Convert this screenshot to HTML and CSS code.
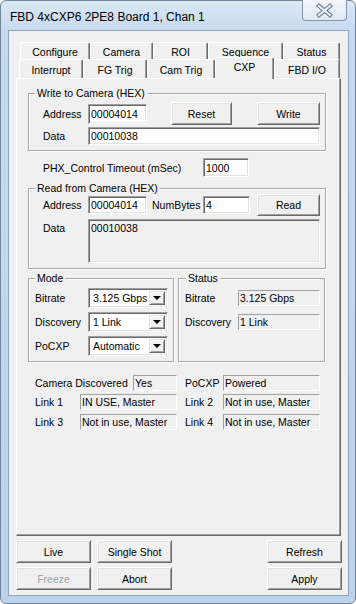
FILE: index.html
```html
<!DOCTYPE html>
<html>
<head>
<meta charset="utf-8">
<link rel="stylesheet" href="styles.css">
</head>
<body>
<div class="window">
  <div class="titlebar">
    <span class="title">FBD 4xCXP6 2PE8 Board 1, Chan 1</span>
    <span class="close">
      <svg width="43" height="19" viewBox="0 0 43 19">
        <path d="M16 5 L27 14 M27 5 L16 14" stroke="#6a7d95" stroke-width="4.2" stroke-linecap="square" fill="none"/>
        <path d="M16 5 L27 14 M27 5 L16 14" stroke="#eef3f8" stroke-width="2" stroke-linecap="square" fill="none"/>
      </svg>
    </span>
  </div>
  <div class="client">
    <div class="tabctl">
      <div class="tabrow row1">
        <div class="tab w-configure">Configure</div>
        <div class="tab w-camera">Camera</div>
        <div class="tab w-roi">ROI</div>
        <div class="tab w-sequence">Sequence</div>
        <div class="tab w-status">Status</div>
      </div>
      <div class="tabrow row2">
        <div class="tab w-interrupt">Interrupt</div>
        <div class="tab w-fgtrig">FG Trig</div>
        <div class="tab w-camtrig">Cam Trig</div>
        <div class="tab sel w-cxp">CXP</div>
        <div class="tab w-fbdio">FBD I/O</div>
      </div>
      <div class="panel">
        <fieldset class="group g-write">
          <legend>Write to Camera (HEX)</legend>
          <div class="row r23">
            <span class="lbl l45">Address</span>
            <span class="edit e-addr">00004014</span>
            <span class="btn b-reset">Reset</span>
            <span class="btn b-write">Write</span>
          </div>
          <div class="row r18 mt2">
            <span class="lbl l45">Data</span>
            <span class="edit e-data">00010038</span>
          </div>
        </fieldset>

        <div class="row r19 timeout">
          <span class="lbl l160">PHX_Control Timeout (mSec)</span>
          <span class="edit e-timeout">1000</span>
        </div>

        <fieldset class="group g-read">
          <legend>Read from Camera (HEX)</legend>
          <div class="row r22">
            <span class="lbl l45">Address</span>
            <span class="edit e-addr2">00004014</span>
            <span class="lbl l-numbytes">NumBytes</span>
            <span class="edit e-num">4</span>
            <span class="btn b-read">Read</span>
          </div>
          <div class="row mt3 top">
            <span class="lbl l45 pt3">Data</span>
            <span class="edit ro e-rdata">00010038</span>
          </div>
        </fieldset>

        <div class="pair">
          <fieldset class="group g-mode">
            <legend>Mode</legend>
            <div class="row r20">
              <span class="lbl l53">Bitrate</span>
              <span class="combo"><span class="cval">3.125 Gbps</span><span class="drop"></span></span>
            </div>
            <div class="row r20 mt4">
              <span class="lbl l53">Discovery</span>
              <span class="combo"><span class="cval">1 Link</span><span class="drop"></span></span>
            </div>
            <div class="row r20 mt4">
              <span class="lbl l53">PoCXP</span>
              <span class="combo"><span class="cval">Automatic</span><span class="drop"></span></span>
            </div>
          </fieldset>
          <fieldset class="group g-status">
            <legend>Status</legend>
            <div class="row r20">
              <span class="lbl l53">Bitrate</span>
              <span class="stat s82">3.125 Gbps</span>
            </div>
            <div class="row r20 mt4">
              <span class="lbl l53">Discovery</span>
              <span class="stat s82">1 Link</span>
            </div>
          </fieldset>
        </div>

        <div class="info">
          <div class="irow">
            <div class="cell cl"><span class="lbl">Camera Discovered</span><span class="stat s44">Yes</span></div>
            <div class="cell cr"><span class="lbl">PoCXP</span><span class="stat s97">Powered</span></div>
          </div>
          <div class="irow mt3">
            <div class="cell cl"><span class="lbl">Link 1</span><span class="stat s97">IN USE, Master</span></div>
            <div class="cell cr"><span class="lbl">Link 2</span><span class="stat s97">Not in use, Master</span></div>
          </div>
          <div class="irow mt4">
            <div class="cell cl"><span class="lbl">Link 3</span><span class="stat s97">Not in use, Master</span></div>
            <div class="cell cr"><span class="lbl">Link 4</span><span class="stat s97">Not in use, Master</span></div>
          </div>
        </div>
      </div>
    </div>

    <div class="btnbar">
      <span class="btn bb">Live</span>
      <span class="btn bb ml6">Single Shot</span>
      <span class="btn bb push">Refresh</span>
    </div>
    <div class="btnbar mt4">
      <span class="btn bb disabled">Freeze</span>
      <span class="btn bb ml6">Abort</span>
      <span class="btn bb push">Apply</span>
    </div>
  </div>
</div>
</body>
</html>
```
FILE: styles.css
```css
* { box-sizing: border-box; }
html, body { margin: 0; padding: 0; background: #ffffff; }
body {
  font-family: "Liberation Sans", Arial, sans-serif;
  font-size: 10.5px;
  color: #000;
}

.window {
  width: 356px;
  height: 604px;
  border: 1px solid #71859d;
  border-radius: 6px;
  background: linear-gradient(#dbe8f5 0, #c6d9ee 30px, #bdd3ea 100%);
  padding: 0 6px 7px 7px;
  display: flex;
  flex-direction: column;
}

.titlebar {
  height: 29px;
  display: flex;
  align-items: flex-start;
}
.title {
  font-size: 12px;
  margin-top: 9px;
  padding-left: 2px;
  line-height: 14px;
}
.close {
  margin-left: auto;
  margin-right: 2px;
  margin-top: -1px;
  width: 45px;
  height: 21px;
  border: 1px solid #8396ad;
  border-top: none;
  border-radius: 0 0 4px 4px;
  background: linear-gradient(#f3f7fb, #dfe8f2);
  display: flex;
  align-items: center;
  justify-content: center;
}
.close svg { display: block; }

.client {
  flex: 1;
  background: #f0f0f0;
  border: 1px solid #8fa4bd;
  padding: 11px 6px 0 7px;
  display: flex;
  flex-direction: column;
}

/* Tabs */
.tabctl { width: 325px; display: flex; flex-direction: column; }
.tabrow { display: flex; }
.row1 { margin-left: 4px; height: 18px; }
.row2 { margin-left: 3px; height: 19px; margin-top: -1px; }
.tab {
  height: 100%;
  background: #f0f0f0;
  border-top: 1px solid #ffffff;
  border-left: 1px solid #ffffff;
  border-right: 1px solid #696969;
  box-shadow: inset -1px 0 #a0a0a0;
  border-radius: 2px 2px 0 0;
  display: flex;
  align-items: center;
  justify-content: center;
  padding-top: 1px;
  white-space: nowrap;
}
.tab.sel {
  height: 22px;
  margin-top: -2px;
  position: relative;
  z-index: 1;
  align-items: flex-start;
  padding-top: 3px;
}
.w-configure { width: 70px; }
.w-camera { width: 63px; }
.w-roi { width: 55px; }
.w-sequence { width: 75px; }
.w-status { width: 57px; }
.w-interrupt { width: 64px; }
.w-fgtrig { width: 64px; }
.w-camtrig { width: 68px; }
.w-cxp { width: 59px; }
.w-fbdio { width: 66px; }

.panel {
  height: 458px;
  border-top: 1px solid #ffffff;
  border-left: 1px solid #ffffff;
  border-right: 1px solid #696969;
  border-bottom: 1px solid #696969;
  box-shadow: inset -1px -1px #a0a0a0;
  display: flex;
  flex-direction: column;
  align-items: flex-start;
}

/* Group boxes (etched frame) */
.group {
  margin: 0;
  border: 1px solid #a9a9a9;
  box-shadow: inset 1px 1px #ffffff, 1px 1px #ffffff;
  min-width: 0;
}
.group legend {
  padding: 0 2px;
  line-height: 12px;
  height: 12px;
  background: #f0f0f0;
}
.g-write {
  margin: 8px 0 0 11px;
  width: 298px;
  padding: 3px 4px 5px 14px;
}
.g-write legend, .g-read legend { margin-left: -8px; }
.g-read {
  margin: 5px 0 0 11px;
  width: 298px;
  padding: 0 4px 5px 14px;
}
.pair {
  display: flex;
  gap: 4px;
  margin: 3px 0 0 11px;
}
.g-mode { width: 146px; padding: 4px 4px 5px 6px; }
.g-status { width: 147px; padding: 4px 4px 5px 6px; }
.g-status legend { margin-left: 1px; }

/* Rows */
.row { display: flex; align-items: center; }
.row.top { align-items: flex-start; }
.r23 { height: 23px; }
.r22 { height: 22px; }
.r20 { height: 20px; }
.r19 { height: 19px; }
.r18 { height: 18px; }
.mt2 { margin-top: 2px; }
.mt3 { margin-top: 3px; }
.mt4 { margin-top: 4px; }
.pt3 { padding-top: 3px; }
.lbl { white-space: nowrap; }
.l45 { width: 45px; }
.l53 { width: 53px; }
.l160 { width: 160px; }
.l-numbytes { width: 51px; margin-left: 5px; }
.timeout { margin: 7px 0 0 26px; }

/* Edits */
.edit {
  background: #ffffff;
  border: 1px solid;
  border-color: #a0a0a0 #ffffff #ffffff #a0a0a0;
  box-shadow: inset 1px 1px #696969, inset -1px -1px #e3e3e3;
  padding-left: 2px;
  display: flex;
  align-items: center;
  white-space: nowrap;
}
.edit.ro {
  background: #f0f0f0;
  align-items: flex-start;
  padding-top: 2px;
}
.e-addr { width: 59px; height: 20px; }
.e-data { width: 232px; height: 18px; }
.e-timeout { width: 46px; height: 19px; }
.e-addr2 { width: 59px; height: 18px; }
.e-num { width: 47px; height: 18px; }
.e-rdata { width: 232px; height: 44px; }

/* Buttons */
.btn {
  background: #f0f0f0;
  border: 1px solid;
  border-color: #ffffff #696969 #696969 #ffffff;
  box-shadow: inset 1px 1px #e3e3e3, inset -1px -1px #a0a0a0;
  display: flex;
  align-items: center;
  justify-content: center;
  white-space: nowrap;
}
.b-reset { width: 61px; height: 23px; margin-left: 24px; }
.b-write { width: 63px; height: 23px; margin-left: 25px; }
.b-read { width: 63px; height: 22px; margin-left: 7px; }

/* Combo */
.combo {
  width: 80px;
  height: 20px;
  background: #ffffff;
  border: 1px solid;
  border-color: #a0a0a0 #ffffff #ffffff #a0a0a0;
  box-shadow: inset 1px 1px #696969, inset -1px -1px #e3e3e3;
  display: flex;
  align-items: stretch;
  padding: 2px;
}
.cval { flex: 1; display: flex; align-items: center; padding-left: 2px; }
.drop {
  width: 16px;
  background: #f0f0f0;
  border: 1px solid;
  border-color: #e3e3e3 #696969 #696969 #e3e3e3;
  box-shadow: inset 1px 1px #ffffff, inset -1px -1px #a0a0a0;
  display: flex;
  align-items: center;
  justify-content: center;
}
.drop::after {
  content: "";
  width: 0;
  height: 0;
  border-left: 4px solid transparent;
  border-right: 4px solid transparent;
  border-top: 4px solid #000;
}

/* Static read-only boxes */
.stat {
  height: 16px;
  background: #f0f0f0;
  border: 1px solid;
  border-color: #a0a0a0 #ffffff #ffffff #a0a0a0;
  padding-left: 1px;
  display: flex;
  align-items: flex-end;
  line-height: 13px;
  white-space: nowrap;
  overflow: hidden;
}
.s82 { width: 82px; }
.s44 { width: 44px; }
.s97 { width: 97px; }

.info { margin: 13px 0 0 18px; }
.irow { display: flex; gap: 8px; height: 16px; }
.cell { display: flex; justify-content: space-between; align-items: center; }
.cl { width: 142px; }
.cr { width: 135px; }

/* Bottom buttons */
.btnbar { display: flex; width: 326px; margin-top: 4px; }
.bb { width: 75px; height: 23px; }
.ml6 { margin-left: 6px; }
.push { margin-left: auto; }
.disabled { color: #a0a0a0; }
```
